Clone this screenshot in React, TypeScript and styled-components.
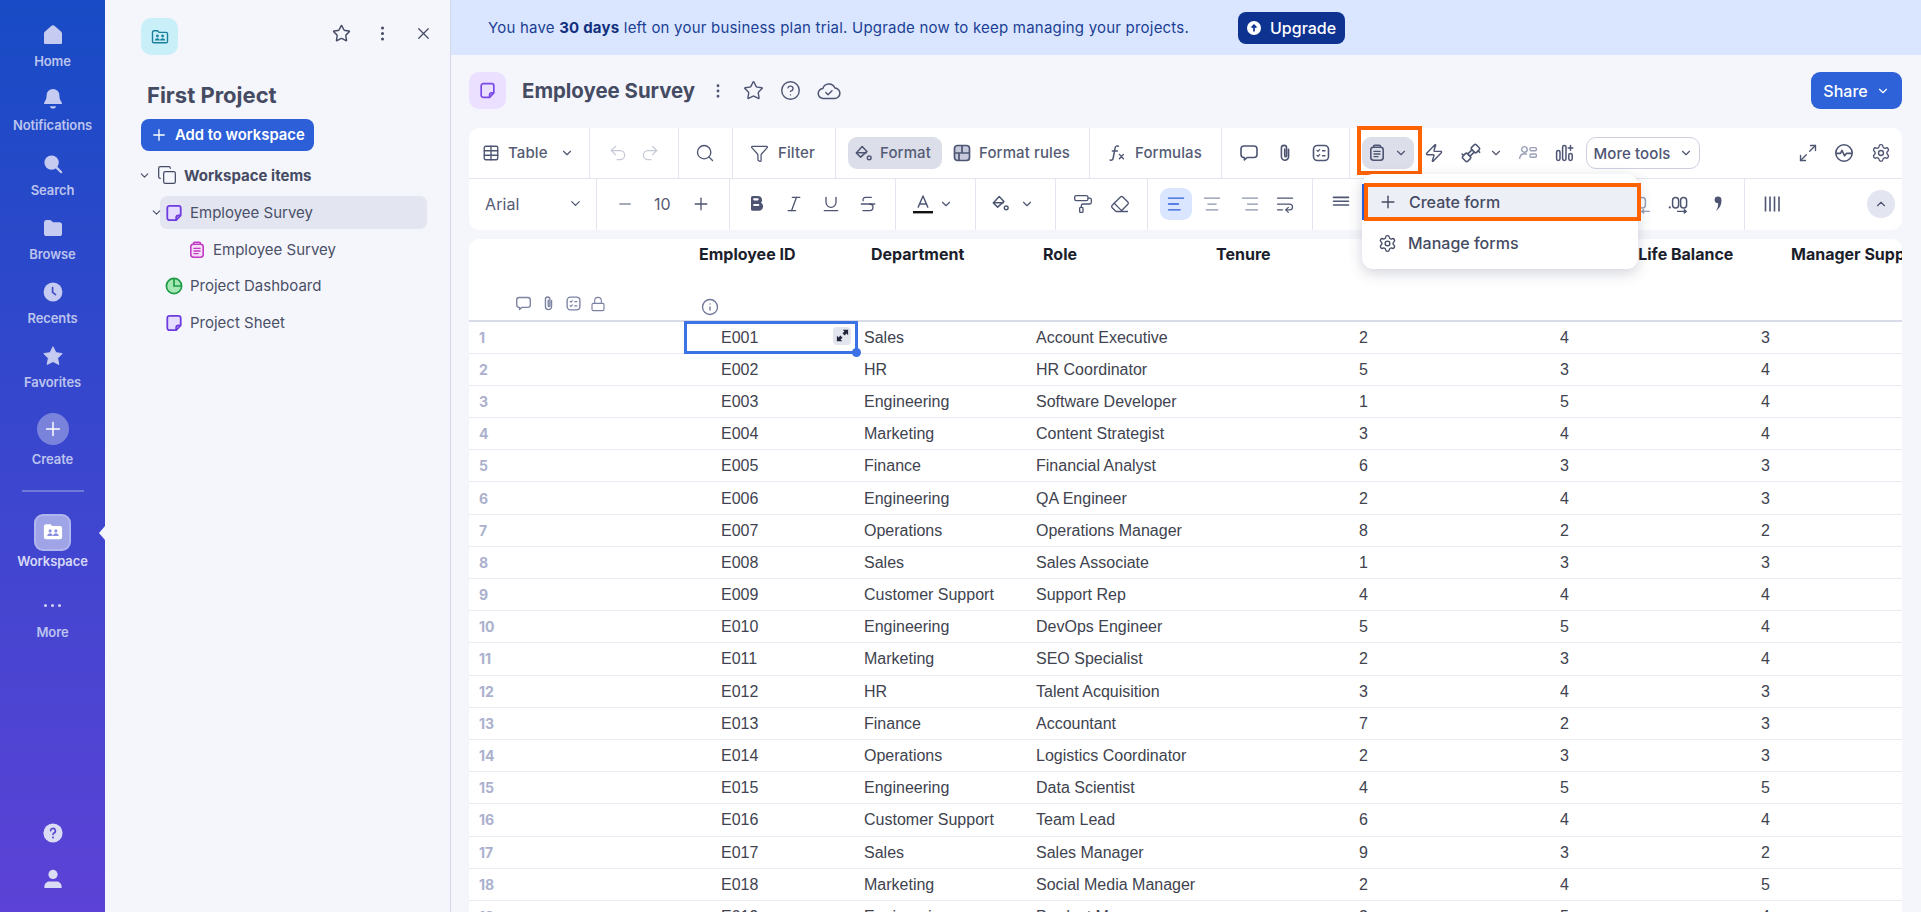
import React from 'react';
import styled, { createGlobalStyle } from 'styled-components';
import {
  AlignCenter,
  AlignLeft,
  AlignRight,
  ChevronDown,
  ChevronUp,
  CircleHelp,
  Copy,
  Eraser,
  Funnel,
  Info,
  Italic,
  Lock,
  Maximize2,
  Minus,
  MoreVertical,
  PaintRoller,
  Plus,
  Redo2,
  Search,
  Settings,
  Star,
  Strikethrough,
  Table,
  Underline,
  Undo2,
  WrapText,
  X,
  Zap,
} from 'lucide-react';

const GlobalStyle = createGlobalStyle`
  html, body {
    margin: 0;
    padding: 0;
    height: 912px;
    overflow: hidden;
  }
  body {
    font-family: 'Inter', 'Liberation Sans', sans-serif;
    color: #4a5068;
  }
  * {
    box-sizing: border-box;
  }
`;

const INK = '#4e5573';

// small drawings which lucide does not have in this shape
const SheetGlyph = ({ size = 18, color = '#6d3be0', fill = 'none' }: { size?: number; color?: string; fill?: string }) => (
  <svg width={size} height={size} viewBox="0 0 18 18" fill="none">
    <path
      d="M4.5 1.8h9A2.2 2.2 0 0 1 15.7 4v7.5l-4.5 4.7H4.5a2.2 2.2 0 0 1-2.2-2.2V4a2.2 2.2 0 0 1 2.2-2.2z"
      fill={fill}
      stroke={color}
      strokeWidth="1.8"
      strokeLinejoin="round"
    />
    <path d="M15.7 11.5h-2.3a2.2 2.2 0 0 0-2.2 2.2v2.5" stroke={color} strokeWidth="1.8" />
  </svg>
);

const FormGlyph = ({ size = 18, color = INK, fill = 'none' }: { size?: number; color?: string; fill?: string }) => (
  <svg width={size} height={size} viewBox="0 0 18 18" fill="none">
    <rect x="2.8" y="3.2" width="12.4" height="13" rx="2.6" fill={fill} stroke={color} strokeWidth="1.6" />
    <path d="M5.5 3V2.6A1.4 1.4 0 0 1 6.9 1.2h4.2a1.4 1.4 0 0 1 1.4 1.4V3" stroke={color} strokeWidth="1.6" />
    <path d="M6 7.4h6M6 10h6M6 12.6h4" stroke={color} strokeWidth="1.4" strokeLinecap="round" />
  </svg>
);

const PieGlyph = () => (
  <svg width="18" height="18" viewBox="0 0 18 18" fill="none">
    <circle cx="9" cy="9" r="7.6" fill="#a6e8b4" stroke="#1f9c47" strokeWidth="1.7" />
    <path d="M9 1.6V9h7.4" stroke="#1f9c47" strokeWidth="1.7" />
  </svg>
);

const FolderPeople = ({ size = 18, color = '#1a7f9c', solid = false }: { size?: number; color?: string; solid?: boolean }) => (
  <svg width={size} height={size} viewBox="0 0 18 18" fill="none">
    <path
      d="M1.5 4.2c0-.8.6-1.4 1.4-1.4h3.6l1.6 1.6h7c.8 0 1.4.6 1.4 1.4v7.6c0 .8-.6 1.4-1.4 1.4H2.9c-.8 0-1.4-.6-1.4-1.4V4.2z"
      fill={solid ? '#fff' : 'none'}
      stroke={solid ? '#fff' : color}
      strokeWidth="1.4"
    />
    <circle cx="6.4" cy="8" r="1.4" fill={color} />
    <circle cx="11.6" cy="8" r="1.4" fill={color} />
    <path d="M3.8 12.6c.2-1.6 1.2-2.4 2.6-2.4s2.2.8 2.4 2.4zM9 12.6c.2-1.6 1.2-2.4 2.6-2.4s2.4.8 2.6 2.4z" fill={color} />
  </svg>
);

const CommentGlyph = ({ size = 20, color = INK }: { size?: number; color?: string }) => (
  <svg width={size} height={size} viewBox="0 0 20 20" fill="none">
    <path
      d="M5 3h10a3 3 0 0 1 3 3v5.5a3 3 0 0 1-3 3H8.2L5.4 17v-2.5H5a3 3 0 0 1-3-3V6a3 3 0 0 1 3-3z"
      stroke={color}
      strokeWidth="1.6"
      strokeLinejoin="round"
    />
  </svg>
);

const ClipGlyph = ({ size = 20, color = INK }: { size?: number; color?: string }) => (
  <svg width={size} height={size} viewBox="0 0 20 20" fill="none">
    <path
      d="M13.6 6.4v7.2a3.6 3.6 0 0 1-7.2 0V5a2.6 2.6 0 0 1 5.2 0v8a1 1 0 0 1-1.9 0V6"
      stroke={color}
      strokeWidth="1.6"
      strokeLinecap="round"
    />
  </svg>
);

const TaskGlyph = ({ size = 20, color = INK }: { size?: number; color?: string }) => (
  <svg width={size} height={size} viewBox="0 0 20 20" fill="none">
    <rect x="2.5" y="2.5" width="15" height="15" rx="4" stroke={color} strokeWidth="1.6" />
    <path d="M6 7.4l1 1 1.6-1.8M6 12.4l1 1 1.6-1.8" stroke={color} strokeWidth="1.3" strokeLinecap="round" />
    <path d="M11.5 7.8h2.5M11.5 12.8h2.5" stroke={color} strokeWidth="1.4" strokeLinecap="round" />
  </svg>
);

const BucketGlyph = ({ size = 20 }: { size?: number }) => (
  <svg width={size} height={size} viewBox="0 0 20 20" fill="none">
    <path d="M8.6 2.6L2.4 9.4l4.6 4.4 6.6-6z" stroke={INK} strokeWidth="1.6" strokeLinejoin="round" />
    <path d="M2.6 9.2h11" stroke={INK} strokeWidth="1.6" />
    <circle cx="16" cy="14.6" r="2" stroke={INK} strokeWidth="1.5" />
  </svg>
);

const FormatRulesGlyph = () => (
  <svg width="20" height="20" viewBox="0 0 20 20" fill="none">
    <rect x="2.5" y="2.5" width="15" height="15" rx="3" fill="#c7cadb" stroke={INK} strokeWidth="1.7" />
    <path d="M2.5 10h15M10 2.5V10M7 10v7.5" stroke={INK} strokeWidth="1.7" />
  </svg>
);

const FxGlyph = () => (
  <svg width="20" height="20" viewBox="0 0 20 20" fill="none">
    <path d="M11.4 3.2C9.4 2.4 8.4 3.4 8 5.4L6.2 15c-.3 1.8-1.4 2.6-3 2" stroke={INK} strokeWidth="1.5" strokeLinecap="round" />
    <path d="M5.4 8h5" stroke={INK} strokeWidth="1.5" strokeLinecap="round" />
    <path d="M12.4 11.4l4 4.4M16.4 11.4l-4 4.4" stroke={INK} strokeWidth="1.4" strokeLinecap="round" />
  </svg>
);

const BoldGlyph = () => (
  <svg width="20" height="20" viewBox="0 0 20 20" fill="none">
    <path
      d="M4 3.6A1.6 1.6 0 0 1 5.6 2H11a4 4 0 0 1 3 6.7 4.4 4.4 0 0 1-2.6 8.1H5.6A1.6 1.6 0 0 1 4 15.2z"
      fill={INK}
    />
    <path d="M7.2 5.3h3.4M7.2 11h4" stroke="#fff" strokeWidth="2.2" strokeLinecap="round" />
  </svg>
);

const FontColorGlyph = () => (
  <svg width="22" height="22" viewBox="0 0 22 22" fill="none">
    <path d="M6 14.6L11 3l5 11.6M7.6 11h6.8" stroke={INK} strokeWidth="1.4" strokeLinejoin="round" />
    <rect x="1" y="18" width="20" height="2.4" fill="#111" />
  </svg>
);

const PeopleListGlyph = () => (
  <svg width="20" height="20" viewBox="0 0 20 20" fill="none" stroke="#9aa0b8" strokeWidth="1.4">
    <circle cx="6.4" cy="6.4" r="2.8" />
    <path d="M1.6 16c.3-3.6 2.2-5.2 4.8-5.2 1 0 1.8.2 2.4.6" />
    <rect x="12" y="4.6" width="6.4" height="3.2" rx="1.2" />
    <rect x="12" y="11" width="6.4" height="3.2" rx="1.2" />
  </svg>
);

const CloudGlyph = () => (
  <svg width="24" height="20" viewBox="0 0 24 20" fill="none">
    <path
      d="M6.4 17.4a4.9 4.9 0 0 1-.6-9.8 6.4 6.4 0 0 1 12.1-.6 5.2 5.2 0 0 1-.4 10.4z"
      stroke={INK}
      strokeWidth="1.5"
      strokeLinejoin="round"
    />
    <path d="M8.8 11.6l2.2 2.2 4-4" stroke={INK} strokeWidth="1.4" strokeLinecap="round" strokeLinejoin="round" />
  </svg>
);

const PlugPairGlyph = () => (
  <svg width="22" height="22" viewBox="0 0 22 22" fill="none" stroke={INK} strokeWidth="1.6" strokeLinecap="round" strokeLinejoin="round">
    <g transform="rotate(-45 11 11)">
      <rect x="1.5" y="7.5" width="6.5" height="7" rx="1.4" />
      <rect x="14" y="7.5" width="6.5" height="7" rx="1.4" />
      <path d="M8 9.4h2.6M8 12.6h2.6M11.4 9.4H14M11.4 12.6H14" />
      <path d="M4 5.4v2M17.6 14.6v2" />
    </g>
  </svg>
);

const BarsPlusGlyph = () => (
  <svg width="20" height="20" viewBox="0 0 20 20" fill="none" stroke={INK} strokeWidth="1.5">
    <rect x="1.6" y="7.4" width="3.4" height="10" rx="1.7" />
    <rect x="7.6" y="2.4" width="3.4" height="15" rx="1.7" />
    <rect x="13.8" y="10.4" width="3.4" height="7" rx="1.7" />
    <path d="M15.5 2.6v4.6M13.2 4.9h4.6" strokeLinecap="round" />
  </svg>
);

const PulseGlyph = () => (
  <svg width="20" height="20" viewBox="0 0 20 20" fill="none" stroke={INK} strokeWidth="1.6" strokeLinejoin="round">
    <circle cx="10" cy="10" r="8.2" />
    <path d="M2 10.4h4.4l1.6-3 2.6 5.4 1.8-2.4H18" />
  </svg>
);

const RowAlignGlyph = () => (
  <svg width="20" height="20" viewBox="0 0 20 20" fill="none" stroke={INK} strokeWidth="1.6" strokeLinecap="round">
    <path d="M2.5 3.4h15M2.5 7.2h15M2.5 11h15" />
  </svg>
);

const PullCursorGlyph = () => (
  <svg width="24" height="20" viewBox="0 0 24 20" fill="none">
    <circle cx="1.8" cy="13.4" r="1.1" fill={INK} />
    <rect x="4.6" y="3.6" width="6" height="10.4" rx="3" stroke={INK} strokeWidth="1.5" />
    <rect x="12.6" y="3.6" width="6" height="10.4" rx="3" stroke={INK} strokeWidth="1.5" />
    <path d="M9 17.4h9M15.8 15.4l2.4 2-2.4 2" stroke={INK} strokeWidth="1.4" />
  </svg>
);

const DecimalGlyph = () => (
  <svg width="18" height="20" viewBox="0 0 18 20" fill="none">
    <rect x="5" y="3.6" width="6.4" height="10.4" rx="3" stroke="#9aa0b8" strokeWidth="1.5" />
    <path d="M16 17.4H8M10.2 15.4l-2.4 2 2.4 2" stroke="#9aa0b8" strokeWidth="1.4" />
  </svg>
);

const CommaGlyph = () => (
  <svg width="20" height="20" viewBox="0 0 20 20" fill="none">
    <circle cx="10" cy="5.8" r="3.4" fill={INK} />
    <path d="M13.3 5.6c.5 5.2-1.6 9-5.5 11.4 1.8-2.4 2.4-4.8 2.3-7.8z" fill={INK} />
  </svg>
);

const VerticalBars = () => (
  <svg width="20" height="20" viewBox="0 0 20 20" fill="none" stroke={INK} strokeWidth="1.6">
    <path d="M3.5 2.5v15M8 2.5v15M12.5 2.5v15M17 2.5v15" />
  </svg>
);

const ExpandTiny = () => (
  <svg width="13" height="13" viewBox="0 0 12 12" fill="#20253a">
    <path d="M6.2.8h5v5L9.6 4.2 8 6 6 4l1.8-1.6zM.8 6.2v5h5L4.2 9.6 6 8 4 6 2.4 7.8z" />
  </svg>
);

// rail icons are all solid
const RailDrawing = ({ name }: { name: string }) => {
  const c = '#c5cbf1';
  switch (name) {
    case 'Home':
      return (
        <svg width="20" height="20" viewBox="0 0 20 20">
          <path d="M1 8.6a3 3 0 0 1 1-2.2L8 1.2a3 3 0 0 1 4 0l6 5.2a3 3 0 0 1 1 2.2V18a1 1 0 0 1-1 1H2a1 1 0 0 1-1-1z" fill={c} />
        </svg>
      );
    case 'Notifications':
      return (
        <svg width="20" height="22" viewBox="0 0 20 22">
          <path d="M10 1a6.4 6.4 0 0 1 6.4 6.4c0 3.4 1 5.2 2.4 7a1 1 0 0 1-.8 1.6H2a1 1 0 0 1-.8-1.6c1.4-1.8 2.4-3.6 2.4-7A6.4 6.4 0 0 1 10 1z" fill={c} />
          <path d="M7 18.2h6c-.2 1.4-1.4 2.4-3 2.4s-2.8-1-3-2.4z" fill={c} />
        </svg>
      );
    case 'Search':
      return (
        <svg width="20" height="20" viewBox="0 0 20 20">
          <circle cx="8.6" cy="8.6" r="7.2" fill={c} />
          <path d="M13.6 13.6l4.6 4.6" stroke={c} strokeWidth="2.2" strokeLinecap="round" />
        </svg>
      );
    case 'Browse':
      return (
        <svg width="20" height="18" viewBox="0 0 20 18">
          <path d="M1 3.4A2.6 2.6 0 0 1 3.6 1h3.2c.8 0 1.4.4 1.9.9L10 3.2h6.4A2.6 2.6 0 0 1 19 5.8v8.6a2.6 2.6 0 0 1-2.6 2.6H3.6A2.6 2.6 0 0 1 1 14.4z" fill={c} />
        </svg>
      );
    case 'Recents':
      return (
        <svg width="20" height="20" viewBox="0 0 20 20">
          <circle cx="10" cy="10" r="9.4" fill={c} />
          <path d="M9.6 5.6v4.8l3 2.2" stroke="#3d48c6" strokeWidth="1.6" fill="none" strokeLinecap="round" />
        </svg>
      );
    case 'Favorites':
      return (
        <svg width="20" height="20" viewBox="0 0 20 20">
          <path d="M10 .8l2.9 5.9 6.3.9-4.6 4.5 1.2 6.4L10 15.5l-5.8 3 1.2-6.4L.8 7.6l6.3-.9z" fill={c} stroke={c} strokeLinejoin="round" />
        </svg>
      );
    case 'Help':
      return (
        <svg width="20" height="20" viewBox="0 0 20 20">
          <circle cx="10" cy="10" r="9.6" fill="#dadcf5" />
          <path d="M7.6 7.8A2.4 2.4 0 1 1 11 10c-.7.4-1 .9-1 1.6" stroke="#5644d0" strokeWidth="1.6" fill="none" strokeLinecap="round" />
          <circle cx="10" cy="14.4" r="1" fill="#5644d0" />
        </svg>
      );
    default:
      return (
        <svg width="20" height="20" viewBox="0 0 20 20">
          <circle cx="10" cy="5.4" r="4.6" fill="#dadcf5" />
          <path d="M1.4 19v-1.6c0-3 2.6-5 5-5h7.2c2.4 0 5 2 5 5V19z" fill="#dadcf5" />
        </svg>
      );
  }
};

const Page = styled.div`
  display: flex;
  width: 1921px;
  height: 912px;
  overflow: hidden;
  background: #f5f6fb;
`;

const Rail = styled.nav`
  position: relative;
  display: flex;
  flex-direction: column;
  align-items: center;
  width: 105px;
  flex-shrink: 0;
  padding: 16px 0 23px;
  background: linear-gradient(180deg, #184bc5 0%, #5c42d6 100%);
`;

const RailItem = styled.div<{ $top?: number; $h?: number }>`
  display: flex;
  flex-direction: column;
  align-items: center;
  width: 100%;
  height: ${(p) => p.$h ?? 64.3}px;
  padding-top: 7px;
  margin-top: ${(p) => p.$top ?? 0}px;
  flex-shrink: 0;
`;

const RailIcon = styled.div<{ $h?: number }>`
  display: flex;
  align-items: center;
  justify-content: center;
  height: ${(p) => p.$h ?? 24}px;
  margin-bottom: 4px;
`;

const RailLabel = styled.span<{ $bright?: boolean }>`
  font-size: 13px;
  font-weight: 600;
  line-height: 20px;
  letter-spacing: -0.1px;
  color: ${(p) => (p.$bright ? '#d6d9f7' : '#bcc4ee')};
`;

const CreateCircle = styled.div`
  display: flex;
  align-items: center;
  justify-content: center;
  width: 32px;
  height: 32px;
  border-radius: 50%;
  background: #7a83dc;
  color: #fff;
`;

const RailDivider = styled.div`
  width: 62px;
  height: 2px;
  margin: 14px 0 22px;
  flex-shrink: 0;
  background: #7078d8;
`;

const WorkspaceTile = styled.div`
  display: flex;
  align-items: center;
  justify-content: center;
  width: 37px;
  height: 37px;
  border-radius: 9px;
  background: #9fa4e6;
  border: 2px solid #b2b6ee;
  flex-shrink: 0;
`;

const RailCaret = styled.div`
  position: absolute;
  right: 0;
  top: 526px;
  width: 6px;
  height: 14px;
  background: #f5f6fb;
  clip-path: polygon(100% 0, 0 50%, 100% 100%);
`;

const MoreDots = styled.div`
  display: flex;
  gap: 4px;
  height: 24px;
  align-items: center;
  margin-bottom: 4px;
  i {
    width: 3px;
    height: 3px;
    border-radius: 50%;
    background: #cfd3f5;
  }
`;

const RailFoot = styled.div`
  display: flex;
  flex-direction: column;
  align-items: center;
  gap: 26px;
  margin-top: auto;
`;

const Panel = styled.aside`
  width: 346px;
  flex-shrink: 0;
  padding: 18px 17px 0 36px;
  border-right: 1px solid #d5d8e8;
`;

const PanelHead = styled.div`
  display: flex;
  align-items: flex-start;
`;

const CyanTile = styled.div`
  display: flex;
  align-items: center;
  justify-content: center;
  width: 37px;
  height: 37px;
  border-radius: 10px;
  background: #c9f0f9;
`;

const PanelActions = styled.div`
  display: flex;
  align-items: center;
  gap: 22px;
  margin: 6px 0 0 auto;
  color: #454b63;
`;

const ProjectName = styled.h2`
  margin: 24px 0 0 6px;
  font-size: 22px;
  font-weight: 700;
  line-height: 32px;
  color: #454b63;
`;

const AddButton = styled.button`
  display: flex;
  align-items: center;
  gap: 7px;
  height: 32px;
  margin-top: 8px;
  padding: 0 9px;
  border: 0;
  border-radius: 8px;
  background: #2d5fd8;
  color: #fff;
  font-family: inherit;
  font-size: 14.8px;
  font-weight: 600;
`;

const TreeHead = styled.div`
  display: flex;
  align-items: center;
  height: 36px;
  margin: 6px 0 0 -3px;
  font-size: 15px;
  font-weight: 700;
  color: #454b63;
`;

const TreeRow = styled.div<{ $active?: boolean; $indent?: number; $mt?: number }>`
  display: flex;
  align-items: center;
  height: 33px;
  margin-top: ${(p) => p.$mt ?? 0}px;
  margin-left: ${(p) => p.$indent ?? 19}px;
  margin-right: 6px;
  padding-left: 5px;
  border-radius: 7px;
  font-size: 15px;
  color: #4a5068;
  background: ${(p) => (p.$active ? '#e3e6f0' : 'transparent')};
  svg {
    flex-shrink: 0;
  }
`;

const TreeLabel = styled.span`
  margin-left: 7px;
`;

const TreeToggle = styled.span<{ $x: number }>`
  position: relative;
  display: flex;
  width: 0;
  left: ${(p) => p.$x}px;
  color: #4a5068;
`;

const Main = styled.main`
  flex: 1;
  min-width: 0;
  display: flex;
  flex-direction: column;
`;

const Banner = styled.div`
  display: flex;
  align-items: center;
  height: 55px;
  padding-left: 37px;
  flex-shrink: 0;
  background: #dae6ff;
  color: #1b3f94;
  font-size: 15px;
  letter-spacing: 0.21px;
  b {
    font-weight: 700;
    color: #12307e;
  }
`;

const UpgradeButton = styled.button`
  display: flex;
  align-items: center;
  gap: 9px;
  height: 32px;
  margin-left: 49px;
  padding: 0 9px;
  border: 0;
  border-radius: 8px;
  background: #0d3290;
  color: #fff;
  font-family: inherit;
  font-size: 16px;
  font-weight: 500;
`;

const Workarea = styled.div`
  flex: 1;
  min-height: 0;
  display: flex;
  flex-direction: column;
  padding: 17px 19px 0 18px;
`;

const TitleBar = styled.div`
  display: flex;
  align-items: center;
  height: 37px;
  flex-shrink: 0;
`;

const SheetTile = styled.div`
  display: flex;
  align-items: center;
  justify-content: center;
  width: 37px;
  height: 37px;
  border-radius: 10px;
  background: #ebe0ff;
`;

const SheetTitle = styled.h1`
  margin: 0 0 0 16px;
  font-size: 20.4px;
  font-weight: 700;
  color: #454b63;
`;

const TitleTools = styled.div`
  display: flex;
  align-items: center;
  gap: 16px;
  margin-left: 14px;
  color: ${INK};
`;

const ShareButton = styled.button`
  display: flex;
  align-items: center;
  justify-content: center;
  gap: 8px;
  width: 91px;
  height: 37px;
  margin-left: auto;
  border: 0;
  border-radius: 9px;
  background: #2d62d9;
  color: #fff;
  font-family: inherit;
  font-size: 16px;
  font-weight: 500;
`;

const ToolbarCard = styled.div`
  position: relative;
  margin-top: 19px;
  flex-shrink: 0;
  border-radius: 10px;
  background: #fff;
`;

const ToolRow = styled.div<{ $h: number; $line?: boolean }>`
  display: flex;
  height: ${(p) => p.$h}px;
  border-bottom: ${(p) => (p.$line ? '1px solid #e3e5f0' : '0')};
`;

const Group = styled.div<{ $w?: number; $pl?: number; $pb?: number; $gap?: number; $last?: boolean }>`
  display: flex;
  align-items: center;
  flex: ${(p) => (p.$w ? `0 0 ${p.$w}px` : '1')};
  gap: ${(p) => p.$gap ?? 0}px;
  padding-left: ${(p) => p.$pl ?? 0}px;
  padding-bottom: ${(p) => p.$pb ?? 0}px;
  border-right: ${(p) => (p.$last ? '0' : '1px solid #e3e5f0')};
  color: ${INK};
  font-size: 15px;
  font-weight: 500;
  letter-spacing: 0.1px;
  svg {
    flex-shrink: 0;
  }
`;

const ToolLabel = styled.span<{ $plain?: boolean }>`
  white-space: nowrap;
  line-height: 20px;
  color: #555b75;
  font-weight: ${(p) => (p.$plain ? 400 : 500)};
  font-size: ${(p) => (p.$plain ? 16 : 15)}px;
`;

const Gap = styled.span<{ $w: number }>`
  flex: 0 0 ${(p) => p.$w}px;
`;

const PillTool = styled.div<{ $w: number; $pl: number; $tone?: string }>`
  display: flex;
  align-items: center;
  width: ${(p) => p.$w}px;
  height: 32px;
  padding-left: ${(p) => p.$pl}px;
  border-radius: 9px;
  background: ${(p) => p.$tone ?? '#dcdfea'};
  flex-shrink: 0;
`;

const MoreToolsButton = styled.div`
  display: flex;
  align-items: center;
  justify-content: center;
  gap: 8px;
  width: 114px;
  height: 32px;
  border: 1px solid #cdd0e0;
  border-radius: 10px;
  color: #4e5573;
`;

const CollapseCircle = styled.div`
  display: flex;
  align-items: center;
  justify-content: center;
  width: 28px;
  height: 28px;
  margin: 0 7px 0 auto;
  border-radius: 50%;
  background: #e3e6f0;
`;

const OrangeTrigger = styled.div`
  position: absolute;
  left: 888px;
  top: -2px;
  width: 65px;
  height: 49px;
  border: 4px solid #ff6200;
  pointer-events: none;
`;

const FormMenu = styled.div`
  position: absolute;
  left: 893px;
  top: 46px;
  width: 276px;
  height: 95px;
  padding-top: 10px;
  border-radius: 11px;
  background: #fff;
  box-shadow: 0 4px 14px rgba(50, 55, 90, 0.22);
  z-index: 3;
`;

const MenuItem = styled.div<{ $hot?: boolean }>`
  position: relative;
  display: flex;
  align-items: center;
  gap: 11px;
  height: 36px;
  padding-left: 16px;
  font-size: 16px;
  font-weight: 500;
  color: #454b63;
  background: ${(p) => (p.$hot ? '#edeff6' : 'transparent')};
  margin-bottom: 5px;
`;

const OrangeItem = styled.div`
  position: absolute;
  left: 2px;
  top: -1px;
  width: 277px;
  height: 38px;
  border: 4px solid #ff6200;
  z-index: 4;
`;

const MenuEdge = styled.div`
  position: absolute;
  left: 0;
  top: 0;
  width: 3px;
  height: 36px;
  background: #2d5fd8;
`;

const Grid = styled.div`
  margin-top: 9px;
  flex: 1;
  min-height: 0;
  overflow: hidden;
  border-radius: 10px 10px 0 0;
  background: #fff;
`;

const columns = '216px 172px 172px 173px 173px 201px 201px 1fr';

const HeadRow = styled.div`
  display: grid;
  grid-template-columns: ${columns};
  height: 82.5px;
  border-bottom: 2px solid #d9dbe8;
`;

const HeadGutter = styled.div`
  display: flex;
  align-items: flex-end;
  justify-content: flex-end;
  gap: 8px;
  padding: 0 79px 8px 0;
  color: #7c82a2;
`;

const HeadCell = styled.div`
  position: relative;
  padding: 5px 0 0 14px;
  font-size: 16px;
  font-weight: 700;
  line-height: 20px;
  color: #1b1e2b;
  white-space: nowrap;
  overflow: hidden;
`;

const HeadInfo = styled.div`
  position: absolute;
  left: 16px;
  top: 59px;
  color: #70779a;
`;

const DataRow = styled.div`
  display: grid;
  grid-template-columns: ${columns};
  height: 32.2px;
  border-bottom: 1.5px solid #eaebf3;
`;

const RowNumber = styled.div`
  display: flex;
  align-items: center;
  padding-left: 10px;
  font-size: 14px;
  font-weight: 700;
  color: #abb1cd;
`;

const Cell = styled.div<{ $pl?: number; $num?: boolean; $selected?: boolean }>`
  position: relative;
  display: flex;
  align-items: center;
  justify-content: ${(p) => (p.$num ? 'flex-end' : 'flex-start')};
  padding: ${(p) => (p.$num ? '1px 7px 0 0' : `1px 0 0 ${p.$pl ?? 7}px`)};
  font-family: 'Liberation Sans', Arial, sans-serif;
  font-size: 16px;
  color: #40434f;
  white-space: nowrap;
  outline: ${(p) => (p.$selected ? '3px solid #3b73e6' : 'none')};
  outline-offset: -2px;
`;

const CellExpand = styled.div`
  position: absolute;
  right: 6px;
  top: 5px;
  display: flex;
  align-items: center;
  justify-content: center;
  width: 18px;
  height: 18px;
  border-radius: 4px;
  background: #e3e5ee;
`;

const CellHandle = styled.div`
  position: absolute;
  right: -4px;
  bottom: -4px;
  width: 9px;
  height: 9px;
  border-radius: 50%;
  background: #3b73e6;
  z-index: 2;
`;

const railItems = ['Home', 'Notifications', 'Search', 'Browse', 'Recents', 'Favorites'];

const headers = ['Employee ID', 'Department', 'Role', 'Tenure', 'Job Satisfaction', 'Work-Life Balance', 'Manager Support'];

const rows: [string, string, string, number, number, number][] = [
  ['E001', 'Sales', 'Account Executive', 2, 4, 3],
  ['E002', 'HR', 'HR Coordinator', 5, 3, 4],
  ['E003', 'Engineering', 'Software Developer', 1, 5, 4],
  ['E004', 'Marketing', 'Content Strategist', 3, 4, 4],
  ['E005', 'Finance', 'Financial Analyst', 6, 3, 3],
  ['E006', 'Engineering', 'QA Engineer', 2, 4, 3],
  ['E007', 'Operations', 'Operations Manager', 8, 2, 2],
  ['E008', 'Sales', 'Sales Associate', 1, 3, 3],
  ['E009', 'Customer Support', 'Support Rep', 4, 4, 4],
  ['E010', 'Engineering', 'DevOps Engineer', 5, 5, 4],
  ['E011', 'Marketing', 'SEO Specialist', 2, 3, 4],
  ['E012', 'HR', 'Talent Acquisition', 3, 4, 3],
  ['E013', 'Finance', 'Accountant', 7, 2, 3],
  ['E014', 'Operations', 'Logistics Coordinator', 2, 3, 3],
  ['E015', 'Engineering', 'Data Scientist', 4, 5, 5],
  ['E016', 'Customer Support', 'Team Lead', 6, 4, 4],
  ['E017', 'Sales', 'Sales Manager', 9, 3, 2],
  ['E018', 'Marketing', 'Social Media Manager', 2, 4, 5],
  ['E019', 'Engineering', 'Product Manager', 3, 5, 4],
];

export default function App() {
  return (
    <Page>
      <GlobalStyle />
      <Rail>
        {railItems.map((name) => (
          <RailItem key={name}>
            <RailIcon>
              <RailDrawing name={name} />
            </RailIcon>
            <RailLabel>{name}</RailLabel>
          </RailItem>
        ))}
        <RailItem $top={4} $h={70}>
          <RailIcon $h={32}>
            <CreateCircle>
              <Plus size={22} strokeWidth={1.6} />
            </CreateCircle>
          </RailIcon>
          <RailLabel>Create</RailLabel>
        </RailItem>
        <RailDivider />
        <WorkspaceTile>
          <FolderPeople size={20} color="#8b8fe0" solid />
        </WorkspaceTile>
        <RailLabel $bright>Workspace</RailLabel>
        <RailItem $top={16}>
          <MoreDots>
            <i />
            <i />
            <i />
          </MoreDots>
          <RailLabel>More</RailLabel>
        </RailItem>
        <RailFoot>
          <RailDrawing name="Help" />
          <RailDrawing name="User" />
        </RailFoot>
        <RailCaret />
      </Rail>

      <Panel>
        <PanelHead>
          <CyanTile>
            <FolderPeople />
          </CyanTile>
          <PanelActions>
            <Star size={19} strokeWidth={1.8} />
            <MoreVertical size={19} strokeWidth={1.8} />
            <X size={19} strokeWidth={1.6} />
          </PanelActions>
        </PanelHead>
        <ProjectName>First Project</ProjectName>
        <AddButton>
          <Plus size={18} strokeWidth={1.8} />
          Add to workspace
        </AddButton>
        <TreeHead>
          <ChevronDown size={13} strokeWidth={2} />
          <Copy size={20} strokeWidth={1.5} style={{ margin: '0 7px 0 6px' }} />
          Workspace items
        </TreeHead>
        <TreeRow $active $mt={3}>
          <TreeToggle $x={-15}>
            <ChevronDown size={13} strokeWidth={2} />
          </TreeToggle>
          <SheetGlyph fill="#e6dcff" />
          <TreeLabel>Employee Survey</TreeLabel>
        </TreeRow>
        <TreeRow $indent={42} $mt={4}>
          <FormGlyph color="#c23bc7" fill="#f5dff7" />
          <TreeLabel>Employee Survey</TreeLabel>
        </TreeRow>
        <TreeRow $mt={3}>
          <PieGlyph />
          <TreeLabel>Project Dashboard</TreeLabel>
        </TreeRow>
        <TreeRow $mt={4}>
          <SheetGlyph fill="#e6dcff" />
          <TreeLabel>Project Sheet</TreeLabel>
        </TreeRow>
      </Panel>

      <Main>
        <Banner>
          <span>
            You have <b>30 days</b> left on your business plan trial. Upgrade now to keep managing your projects.
          </span>
          <UpgradeButton>
            <svg width="14" height="14" viewBox="0 0 14 14">
              <circle cx="7" cy="7" r="7" fill="#fff" />
              <path d="M7 10.6V4.4M4.6 6.6L7 4.2l2.4 2.4" stroke="#0d3290" strokeWidth="1.7" fill="none" />
            </svg>
            Upgrade
          </UpgradeButton>
        </Banner>

        <Workarea>
          <TitleBar>
            <SheetTile>
              <SheetGlyph size={17} color="#7a4ae8" />
            </SheetTile>
            <SheetTitle>Employee Survey</SheetTitle>
            <TitleTools>
              <MoreVertical size={18} strokeWidth={1.8} />
              <Star size={21} strokeWidth={1.6} />
              <CircleHelp size={21} strokeWidth={1.6} />
              <CloudGlyph />
            </TitleTools>
            <ShareButton>
              Share
              <ChevronDown size={14} strokeWidth={2} />
            </ShareButton>
          </TitleBar>

          <ToolbarCard>
            <ToolRow $h={51} $line>
              <Group $w={121} $pl={13}>
                <Table size={18} strokeWidth={1.8} />
                <Gap $w={8} />
                <ToolLabel>Table</ToolLabel>
                <Gap $w={12} />
                <ChevronDown size={14} strokeWidth={2} />
              </Group>
              <Group $w={89} $pl={18} $gap={12}>
                <Undo2 size={20} strokeWidth={1.5} color="#c6c9d6" />
                <Redo2 size={20} strokeWidth={1.5} color="#c6c9d6" />
              </Group>
              <Group $w={54} $pl={16}>
                <Search size={20} strokeWidth={1.6} />
              </Group>
              <Group $w={103} $pl={17}>
                <Funnel size={19} strokeWidth={1.6} />
                <Gap $w={9} />
                <ToolLabel>Filter</ToolLabel>
              </Group>
              <Group $w={254} $pl={12}>
                <PillTool $w={94} $pl={6}>
                  <BucketGlyph size={19} />
                  <Gap $w={7} />
                  <ToolLabel>Format</ToolLabel>
                </PillTool>
                <Gap $w={10} />
                <FormatRulesGlyph />
                <Gap $w={7} />
                <ToolLabel>Format rules</ToolLabel>
              </Group>
              <Group $w={132} $pl={17}>
                <FxGlyph />
                <Gap $w={8} />
                <ToolLabel>Formulas</ToolLabel>
              </Group>
              <Group $w={128} $pl={17} $gap={16}>
                <CommentGlyph />
                <ClipGlyph />
                <TaskGlyph />
              </Group>
              <Group $pl={12} $last>
                <PillTool $w={52} $pl={6}>
                  <FormGlyph />
                  <Gap $w={8} />
                  <ChevronDown size={14} strokeWidth={2} />
                </PillTool>
                <Gap $w={10} />
                <Zap size={20} strokeWidth={1.7} />
                <Gap $w={16} />
                <PlugPairGlyph />
                <Gap $w={7} />
                <ChevronDown size={14} strokeWidth={2} />
                <Gap $w={15} />
                <PeopleListGlyph />
                <Gap $w={17} />
                <BarsPlusGlyph />
                <Gap $w={11} />
                <MoreToolsButton>
                  More tools
                  <ChevronDown size={14} strokeWidth={2} />
                </MoreToolsButton>
                <Gap $w={98} />
                <Maximize2 size={20} strokeWidth={1.6} />
                <Gap $w={16} />
                <PulseGlyph />
                <Gap $w={17} />
                <Settings size={20} strokeWidth={1.6} />
              </Group>
            </ToolRow>
            <ToolRow $h={51}>
              <Group $w={128} $pl={16} $pb={2}>
                <ToolLabel $plain>Arial</ToolLabel>
                <Gap $w={48} />
                <ChevronDown size={15} strokeWidth={2} />
              </Group>
              <Group $w={133} $pl={19} $pb={2}>
                <Minus size={18} strokeWidth={1.6} />
                <Gap $w={20} />
                <ToolLabel $plain>10</ToolLabel>
                <Gap $w={20} />
                <Plus size={20} strokeWidth={1.6} />
              </Group>
              <Group $w={166} $pl={17} $pb={2} $gap={17}>
                <BoldGlyph />
                <Italic size={20} strokeWidth={1.6} />
                <Underline size={20} strokeWidth={1.6} />
                <Strikethrough size={20} strokeWidth={1.6} />
              </Group>
              <Group $w={80} $pl={16} $pb={2} $gap={5}>
                <FontColorGlyph />
                <ChevronDown size={14} strokeWidth={2} />
              </Group>
              <Group $w={80} $pl={15} $pb={2} $gap={10}>
                <BucketGlyph size={19} />
                <ChevronDown size={14} strokeWidth={2} />
              </Group>
              <Group $w={92} $pl={17} $pb={2} $gap={17}>
                <PaintRoller size={20} strokeWidth={1.6} />
                <Eraser size={20} strokeWidth={1.6} />
              </Group>
              <Group $w={165} $pl={12} $pb={2}>
                <PillTool $w={32} $pl={6} $tone="#dae6ff">
                  <AlignLeft size={20} strokeWidth={1.6} color="#2d5fd8" />
                </PillTool>
                <Gap $w={10} />
                <AlignCenter size={20} strokeWidth={1.5} color="#8c92aa" />
                <Gap $w={18} />
                <AlignRight size={20} strokeWidth={1.5} color="#8c92aa" />
                <Gap $w={15} />
                <WrapText size={20} strokeWidth={1.5} />
              </Group>
              <Group $w={432} $pl={18} $pb={2}>
                <RowAlignGlyph />
                <Gap $w={283} />
                <DecimalGlyph />
                <Gap $w={16} />
                <PullCursorGlyph />
                <Gap $w={16} />
                <CommaGlyph />
              </Group>
              <Group $pl={17} $pb={2} $last>
                <VerticalBars />
                <CollapseCircle>
                  <ChevronUp size={14} strokeWidth={2} />
                </CollapseCircle>
              </Group>
            </ToolRow>
            <OrangeTrigger />
            <FormMenu>
              <MenuItem $hot>
                <MenuEdge />
                <Plus size={20} strokeWidth={1.7} />
                Create form
                <OrangeItem />
              </MenuItem>
              <MenuItem>
                <Settings size={19} strokeWidth={1.7} />
                Manage forms
              </MenuItem>
            </FormMenu>
          </ToolbarCard>

          <Grid>
            <HeadRow>
              <HeadGutter>
                <CommentGlyph size={17} color="#7c82a2" />
                <ClipGlyph size={17} color="#7c82a2" />
                <TaskGlyph size={17} color="#7c82a2" />
                <Lock size={16} strokeWidth={1.7} />
              </HeadGutter>
              {headers.map((h, i) => (
                <HeadCell key={h}>
                  {h}
                  {i === 0 && (
                    <HeadInfo>
                      <Info size={18} strokeWidth={1.8} />
                    </HeadInfo>
                  )}
                </HeadCell>
              ))}
            </HeadRow>
            {rows.map((r, i) => (
              <DataRow key={r[0]}>
                <RowNumber>{i + 1}</RowNumber>
                <Cell $pl={36} $selected={i === 0}>
                  {r[0]}
                  {i === 0 && (
                    <>
                      <CellExpand>
                        <ExpandTiny />
                      </CellExpand>
                      <CellHandle />
                    </>
                  )}
                </Cell>
                <Cell>{r[1]}</Cell>
                <Cell>{r[2]}</Cell>
                <Cell $num>{r[3]}</Cell>
                <Cell $num>{r[4]}</Cell>
                <Cell $num>{r[5]}</Cell>
              </DataRow>
            ))}
          </Grid>
        </Workarea>
      </Main>
    </Page>
  );
}
